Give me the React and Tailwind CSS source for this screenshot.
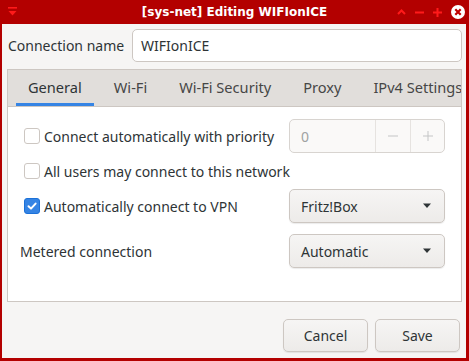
import React from 'react';

const CheckBox = ({ checked }) => {
  if (checked) {
    return (
      <span className="w-4 h-4 rounded-[3px] bg-[#3584e4] border border-[#1c71d8] flex items-center justify-center shrink-0">
        <svg width="12" height="12" viewBox="0 0 12 12">
          <path d="M2.5 6.2 L5 8.6 L9.6 3.6" fill="none" stroke="#fff" strokeWidth="2" strokeLinecap="round" strokeLinejoin="round" />
        </svg>
      </span>
    );
  }
  return <span className="w-4 h-4 rounded-[3px] bg-white border border-[#cdc7c2] shrink-0" />;
};

const Combo = ({ value }) => (
  <div className="w-[156px] h-[34px] rounded-[5px] border border-[#cdc7c2] bg-gradient-to-b from-[#f6f5f4] to-[#edebe9] shadow-[0_1px_1px_rgba(0,0,0,0.08)] flex items-center justify-between pl-[11px] pr-[12px] text-[#2e3436]">
    <span>{value}</span>
    <svg width="10" height="6" viewBox="0 0 10 6">
      <path d="M1 0.5 L9 0.5 L5 5 Z" fill="#2e3436" />
    </svg>
  </div>
);

export default function App() {
  const tabs = ['General', 'Wi-Fi', 'Wi-Fi Security', 'Proxy', 'IPv4 Settings'];

  return (
    <div
      className="w-[469px] h-[361px] bg-[#b30000] flex flex-col pl-[2px] pr-[3px] pb-[3px] overflow-hidden"
      style={{ fontFamily: '"Noto Sans", sans-serif' }}
    >
      {/* title bar */}
      <div className="h-[24px] -ml-[2px] -mr-[3px] grid grid-cols-[1fr_auto_1fr] items-center">
        <div className="pl-[8px] flex items-center">
          <svg width="9" height="10" viewBox="0 0 9 10">
            <rect x="0" y="0" width="9" height="1.6" fill="#ff1a1a" />
            <path d="M0.5 4 L8.5 4 L4.5 8.5 Z" fill="#ff1a1a" />
          </svg>
        </div>
        <div className="text-white font-bold text-[12px]" style={{ fontFamily: '"DejaVu Sans", sans-serif' }}>
          [sys-net] Editing WIFIonICE
        </div>
        <div className="flex items-center justify-end gap-[9px] pr-[4px]">
          <svg width="9" height="6" viewBox="0 0 9 6">
            <path d="M1 5 L4.5 1.5 L8 5" fill="none" stroke="#ff1a1a" strokeWidth="2" />
          </svg>
          <svg width="9" height="9" viewBox="0 0 9 9">
            <rect x="0" y="3.5" width="9" height="2" fill="#ff1a1a" />
          </svg>
          <svg width="9" height="9" viewBox="0 0 9 9">
            <rect x="0" y="3.5" width="9" height="2" fill="#ff1a1a" />
            <rect x="3.5" y="0" width="2" height="9" fill="#ff1a1a" />
          </svg>
          <svg width="14" height="14" viewBox="0 0 14 14">
            <circle cx="7" cy="7" r="7" fill="#fff" />
            <path d="M4.3 4.3 L9.7 9.7 M9.7 4.3 L4.3 9.7" stroke="#c00000" strokeWidth="2.2" />
          </svg>
        </div>
      </div>

      {/* body */}
      <div className="flex-1 bg-[#f6f5f4] flex flex-col text-[14px] text-[#2e3436]">
        <div className="pt-[5px] flex items-center">
          <span className="pl-[6px] w-[130px] shrink-0">Connection name</span>
          <div className="flex-1 mr-[4px] h-[33px] rounded-[5px] border border-[#cdc7c2] bg-white flex items-center px-[8px]">
            WIFIonICE
          </div>
        </div>

        {/* notebook */}
        <div className="mt-[7px] ml-[5px] mr-[4px] h-[233px] border border-[#cdc7c2] flex flex-col">
          <div className="h-[37px] bg-[#e1dedb] border-b border-[#cdc7c2] flex px-2 gap-2 overflow-hidden shrink-0 text-[14.6px]">
            {tabs.map((t, i) => (
              <div
                key={t}
                className={
                  'px-3 flex items-center whitespace-nowrap border-b-[3px] pt-[3px] ' +
                  (i === 0 ? 'border-[#3584e4] text-[#2e3436]' : 'border-transparent text-[#464646]')
                }
              >
                {t}
              </div>
            ))}
          </div>

          <div className="flex-1 bg-white pt-3 pl-3 pr-4 flex flex-col gap-[6px]">
            <div className="h-[34px] flex items-center justify-between">
              <label className="flex items-center gap-1 ml-1">
                <CheckBox />
                <span>Connect automatically with priority</span>
              </label>
              <div className="w-[156px] h-[34px] rounded-[5px] border border-[#d8d4d0] bg-[#faf9f8] flex text-[#a0a2a2]">
                <div className="flex-1 flex items-center pl-[11px]">0</div>
                <div className="w-[35px] border-l border-[#e6e3e0] flex items-center justify-center">
                  <svg width="10" height="10" viewBox="0 0 10 10">
                    <rect x="0" y="4.5" width="10" height="1" fill="#c4c6c6" />
                  </svg>
                </div>
                <div className="w-[34px] border-l border-[#e6e3e0] flex items-center justify-center">
                  <svg width="10" height="10" viewBox="0 0 10 10">
                    <rect x="0" y="4.5" width="10" height="1" fill="#c4c6c6" />
                    <rect x="4.5" y="0" width="1" height="10" fill="#c4c6c6" />
                  </svg>
                </div>
              </div>
            </div>

            <div className="h-[24px] flex items-center">
              <label className="flex items-center gap-1 ml-1">
                <CheckBox />
                <span>All users may connect to this network</span>
              </label>
            </div>

            <div className="h-[34px] flex items-center justify-between">
              <label className="flex items-center gap-1 ml-1">
                <CheckBox checked />
                <span>Automatically connect to VPN</span>
              </label>
              <Combo value="Fritz!Box" />
            </div>

            <div className="h-[34px] mt-[5px] flex items-center justify-between">
              <span>Metered connection</span>
              <Combo value="Automatic" />
            </div>
          </div>
        </div>

        {/* buttons */}
        <div className="pt-[17px] pr-[6px] flex justify-end gap-[7px]">
          <button className="w-[85px] h-[33px] rounded-[5px] border border-[#cdc7c2] bg-gradient-to-b from-[#f6f5f4] to-[#edebe9] shadow-[0_1px_1px_rgba(0,0,0,0.08)]">
            Cancel
          </button>
          <button className="w-[85px] h-[33px] rounded-[5px] border border-[#cdc7c2] bg-gradient-to-b from-[#f6f5f4] to-[#edebe9] shadow-[0_1px_1px_rgba(0,0,0,0.08)]">
            Save
          </button>
        </div>
      </div>
    </div>
  );
}
